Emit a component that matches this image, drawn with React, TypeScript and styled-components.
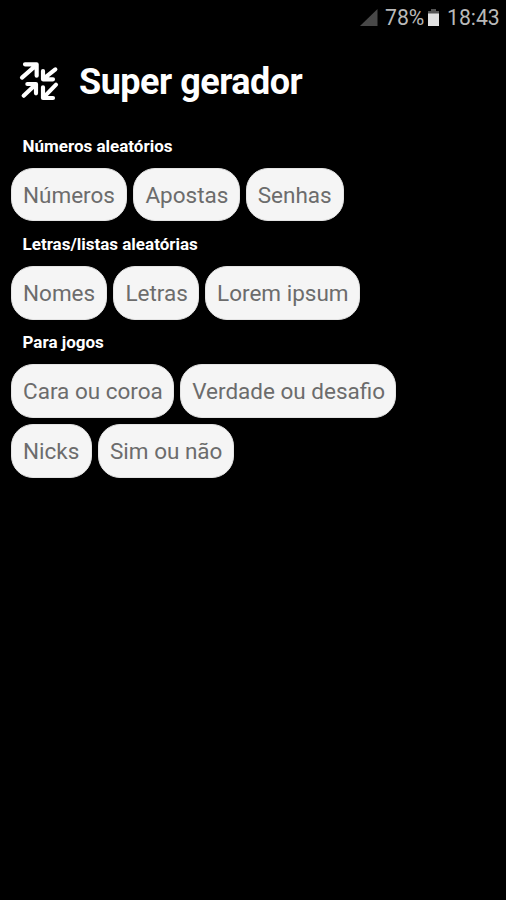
import React from 'react';
import styled, { createGlobalStyle } from 'styled-components';

const GlobalStyle = createGlobalStyle`
  html, body { margin: 0; background: #000; }
  * { box-sizing: border-box; }
`;

const Screen = styled.main`
  width: 506px;
  height: 900px;
  overflow: hidden;
  background: #000;
  color: #fff;
  font-family: Roboto, 'Liberation Sans', sans-serif;
`;

const StatusBar = styled.div`
  height: 36px;
  padding: 0 7px 0 0;
  display: flex;
  justify-content: flex-end;
  align-items: center;
  color: #b9b9b9;
  font-size: 21.2px;
  line-height: 34px;
`;

const SignalIcon = styled.svg`
  width: 18px;
  height: 18px;
  margin-right: 7px;
`;

const BatteryIcon = styled.svg`
  width: 13px;
  height: 18px;
  margin: 0 7px 0 2px;
`;

const StatusText = styled.span<{ $width: number }>`
  width: ${(p) => p.$width}px;
  white-space: nowrap;
`;

const Header = styled.header`
  height: 92.5px;
  padding: 14px 0 0 10px;
  display: flex;
  align-items: flex-start;
`;

const Logo = styled.svg`
  width: 60px;
  height: 60px;
  flex: none;
`;

const Title = styled.h1`
  margin: 7px 0 0 9px;
  font-size: 36px;
  line-height: 51px;
  font-weight: 700;
  letter-spacing: -0.5px;
  white-space: nowrap;
`;

const Section = styled.section`
  height: 98.4px;
`;

const SectionTitle = styled.h2`
  margin: 0;
  height: 39.2px;
  padding-left: 22.5px;
  font-size: 17px;
  line-height: 35px;
  font-weight: 700;
  white-space: nowrap;
`;

const ChipGroup = styled.div`
  padding: 0 60px 0 11px;
  display: flex;
  flex-wrap: wrap;
  gap: 6.2px;
`;

const Chip = styled.button<{ $width: number }>`
  width: ${(p) => p.$width}px;
  height: 53.6px;
  padding: 1px 0 0 11px;
  border: 1px solid #e4e4e4;
  border-radius: 22px;
  background: #f5f5f5;
  color: #6c6c6c;
  font-family: inherit;
  font-size: 22.5px;
  line-height: 51px;
  text-align: left;
  white-space: nowrap;
`;

const sections: { title: string; chips: [string, number][] }[] = [
  { title: 'Números aleatórios', chips: [['Números', 116.2], ['Apostas', 106.2], ['Senhas', 98.2]] },
  { title: 'Letras/listas aleatórias', chips: [['Nomes', 96.2], ['Letras', 85.5], ['Lorem ipsum', 155.4]] },
  { title: 'Para jogos', chips: [['Cara ou coroa', 163], ['Verdade ou desafio', 216.2], ['Nicks', 80.8], ['Sim ou não', 136.4]] },
];

export default function App() {
  return (
    <>
      <GlobalStyle />
      <Screen>
        <StatusBar>
          <SignalIcon viewBox="0 0 18 18"><path d="M17.5 0V17H0z" fill="#484848" /></SignalIcon>
          <StatusText $width={40}>78%</StatusText>
          <BatteryIcon viewBox="0 0 13 18">
            <path d="M4 0h5v2h3v3H1V2h3z" fill="#555" />
            <path d="M1 4.5h11V17H1z" fill="#e2e2e2" />
          </BatteryIcon>
          <StatusText $width={52}>18:43</StatusText>
        </StatusBar>
        <Header>
          <Logo viewBox="0 0 180 180" fill="none" stroke="#fff" strokeWidth="12.5" strokeLinecap="round" strokeLinejoin="round">
            <path d="M45 43H80V77M78 46L36 83" />
            <path d="M99 63V88H129M101 86L136 58" />
            <path d="M52 102H78V130M76 104L41 137" />
            <path d="M99 112V144H129M101 142L138 104" />
          </Logo>
          <Title>Super gerador</Title>
        </Header>
        {sections.map((s) => (
          <Section key={s.title}>
            <SectionTitle>{s.title}</SectionTitle>
            <ChipGroup>
              {s.chips.map(([label, width]) => (
                <Chip key={label} $width={width}>{label}</Chip>
              ))}
            </ChipGroup>
          </Section>
        ))}
      </Screen>
    </>
  );
}
